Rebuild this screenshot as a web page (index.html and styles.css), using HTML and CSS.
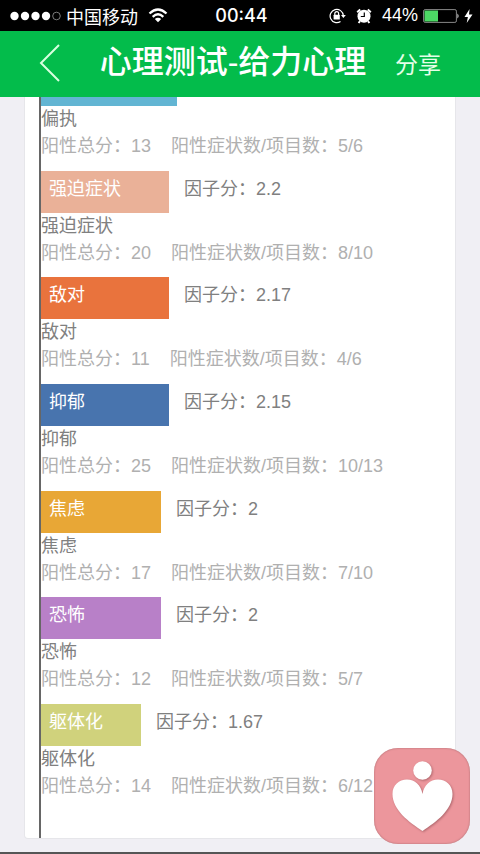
FILE: index.html
```html
<!DOCTYPE html>
<html lang="zh-CN">
<head>
    <meta charset="UTF-8">
    <meta name="viewport" content="width=device-width, initial-scale=1.0">
    <title>心理测试-给力心理</title>
    <link rel="stylesheet" href="styles.css">
</head>
<body>

    <div class="status-bar">
        <div class="status-left">
            <svg width="51" height="10" viewBox="0 0 51 10" fill="#fff">
                <circle cx="4.5" cy="5" r="4.2"/>
                <circle cx="15" cy="5" r="4.2"/>
                <circle cx="25.5" cy="5" r="4.2"/>
                <circle cx="36" cy="5" r="4.2"/>
                <circle cx="46.5" cy="5" r="3.8" fill="none" stroke="#999" stroke-width="0.8"/>
            </svg>
            <span class="carrier">中国移动</span>
            <svg width="20" height="15" viewBox="0 0 20 15" fill="none" stroke="#fff" stroke-width="2.3">
                <path d="M1.5 5.5Q10 -2.5 18.5 5.5"/>
                <path d="M4.7 8.8Q10 3.8 15.3 8.8"/>
                <path d="M10 14.2L6.8 11Q10 8.3 13.2 11Z" fill="#fff" stroke="none"/>
            </svg>
        </div>
        <span class="clock">00:44</span>
        <div class="status-right">
            <svg class="lock" width="17" height="16" viewBox="0 0 17 16" fill="none" stroke="#fff" stroke-width="1.2">
                <path d="M11.5 13.4A6.6 6.6 0 1 1 14.3 7.5"/>
                <path d="M12 7H16.8L14.4 10Z" fill="#fff" stroke="none"/>
                <path d="M5.8 7V5.6A1.9 1.9 0 0 1 9.6 5.6V7"/>
                <rect x="4.6" y="6.8" width="6.2" height="4.6" rx="0.5" fill="#fff" stroke="none"/>
            </svg>
            <svg class="alarm" width="16" height="16" viewBox="0 0 16 16">
                <circle cx="8" cy="8.2" r="6.5" fill="#fff"/>
                <path d="M1.2 4.2L4.2 1.4M14.8 4.2L11.8 1.4M4 13.2L2.6 15M12 13.2L13.4 15" stroke="#fff" stroke-width="2"/>
                <path d="M8.3 4.5V8.5H4.8" fill="none" stroke="#000" stroke-width="1.2"/>
            </svg>
            <span class="percent">44%</span>
            <svg width="37" height="16" viewBox="0 0 37 16">
                <rect x="0.6" y="1.6" width="32.8" height="12.8" rx="1.5" fill="none" stroke="#888" stroke-width="1"/>
                <rect x="1.5" y="2.5" width="13.5" height="11" fill="#4cd964"/>
                <path d="M34.5 5.5Q36.5 8 34.5 10.5Z" fill="#fff"/>
            </svg>
            <svg class="bolt" width="9" height="14" viewBox="0 0 9 14" fill="#fff">
                <path d="M5.6 0L0.5 8H3.9L2.7 14L8.5 5.5H5Z"/>
            </svg>
        </div>
    </div>

    <header class="nav">
        <button class="back" aria-label="返回">
            <svg width="22" height="38" viewBox="0 0 22 38" fill="none" stroke="#d9ffe0" stroke-width="2">
                <path d="M20 1L2 19L20 37"/>
            </svg>
        </button>
        <h1>心理测试-给力心理</h1>
        <button class="share">分享</button>
    </header>

    <main class="card">
        <ul class="factors">
            <li>
                <div class="bar-row clipped">
                    <span class="bar paranoia" style="width: 34%"></span>
                </div>
                <p class="name">偏执</p>
                <p class="detail"><span>阳性总分：13</span><span>阳性症状数/项目数：5/6</span></p>
            </li>
            <li>
                <div class="bar-row">
                    <span class="bar obsessive" style="width: 32%">强迫症状</span>
                    <span class="score">因子分：2.2</span>
                </div>
                <p class="name">强迫症状</p>
                <p class="detail"><span>阳性总分：20</span><span>阳性症状数/项目数：8/10</span></p>
            </li>
            <li>
                <div class="bar-row">
                    <span class="bar hostility" style="width: 32%">敌对</span>
                    <span class="score">因子分：2.17</span>
                </div>
                <p class="name">敌对</p>
                <p class="detail"><span>阳性总分：11</span><span>阳性症状数/项目数：4/6</span></p>
            </li>
            <li>
                <div class="bar-row">
                    <span class="bar depression" style="width: 32%">抑郁</span>
                    <span class="score">因子分：2.15</span>
                </div>
                <p class="name">抑郁</p>
                <p class="detail"><span>阳性总分：25</span><span>阳性症状数/项目数：10/13</span></p>
            </li>
            <li>
                <div class="bar-row">
                    <span class="bar anxiety" style="width: 30%">焦虑</span>
                    <span class="score">因子分：2</span>
                </div>
                <p class="name">焦虑</p>
                <p class="detail"><span>阳性总分：17</span><span>阳性症状数/项目数：7/10</span></p>
            </li>
            <li>
                <div class="bar-row">
                    <span class="bar phobia" style="width: 30%">恐怖</span>
                    <span class="score">因子分：2</span>
                </div>
                <p class="name">恐怖</p>
                <p class="detail"><span>阳性总分：12</span><span>阳性症状数/项目数：5/7</span></p>
            </li>
            <li>
                <div class="bar-row">
                    <span class="bar somatic" style="width: 25%">躯体化</span>
                    <span class="score">因子分：1.67</span>
                </div>
                <p class="name">躯体化</p>
                <p class="detail"><span>阳性总分：14</span><span>阳性症状数/项目数：6/12</span></p>
            </li>
        </ul>
    </main>

    <!-- Floating logo button -->
    <button class="logo" aria-label="给力心理">
        <svg width="96" height="96" viewBox="0 0 96 96" fill="#fff">
            <circle cx="48.5" cy="22.5" r="9.3"/>
            <path d="M48.5 83C35 74 18.5 62 18.5 46C18.5 37 25 31.5 33 31.5C41 31.5 47 37 48.5 46C50 37 56 31.5 64 31.5C72 31.5 78.5 37 78.5 46C78.5 62 62 74 48.5 83Z"/>
        </svg>
    </button>

</body>
</html>
```

FILE: styles.css
```css
* {
    box-sizing: border-box;
}

body {
    margin: 0;
    min-height: 100vh;
    display: flex;
    flex-direction: column;
    font-family: "Liberation Sans", "Noto Sans CJK SC", sans-serif;
    font-size: 18px;
    background-color: #f0eff4;
    border-bottom: 2px solid #555;
}

button {
    border: none;
    padding: 0;
    background: none;
    font-family: inherit;
    cursor: pointer;
}

svg {
    display: block;
}

.status-bar {
    display: grid;
    grid-template-columns: 1fr auto 1fr;
    align-items: center;
    height: 31px;
    padding: 0 7px 0 10px;
    background-color: #000;
    color: #fff;
}

.status-left, .status-right {
    display: flex;
    align-items: center;
}

.status-right {
    justify-content: flex-end;
}

.carrier {
    margin: 0 10px 0 5px;
}

.clock {
    font-family: Inter, sans-serif;
    font-size: 18px;
    font-weight: 500;
}

.percent {
    margin-right: 5px;
}

.lock, .alarm {
    margin-right: 10px;
}

.bolt {
    margin-left: 4px;
}

.nav {
    display: flex;
    align-items: center;
    justify-content: space-between;
    height: 66px;
    padding: 0 39px 2px;
    background-color: #03bc4b;
    color: #fff;
}

.nav h1 {
    margin: 0;
    font-size: 32px;
    font-weight: 500;
    line-height: 40px;
    padding-bottom: 2px;
    padding-left: 10px;
}

.share {
    color: #e4ffe8;
    font-size: 23px;
}

.card {
    flex: 1;
    display: flex;
    margin: 0 24px 13px;
    padding: 0 14px;
    background-color: #fff;
    border: 1px solid #e6e6ea;
    border-top: none;
    border-radius: 0 0 4px 4px;
}

.factors {
    flex: 1;
    display: flex;
    flex-direction: column;
    justify-content: space-between;
    margin: 0;
    padding: 0 0 38px;
    list-style: none;
    border-left: 2px solid #666;
}

.bar-row {
    display: flex;
    height: 42px;
    line-height: 36px;
}

.bar-row.clipped {
    height: 9px;
}

.bar {
    padding-left: 8px;
    color: #fff;
}

.score {
    margin-left: 15px;
    color: #808080;
}

.name, .detail {
    margin: 0;
    line-height: 27px;
}

.name {
    color: #808080;
}

.detail {
    display: flex;
    gap: 20px;
    color: #b0b0b0;
}

.paranoia {
    background-color: #62b5d3;
}

.obsessive {
    background-color: #eab198;
}

.hostility {
    background-color: #e9733d;
}

.depression {
    background-color: #4874ae;
}

.anxiety {
    background-color: #e8a736;
}

.phobia {
    background-color: #b880c8;
}

.somatic {
    background-color: #d0d27c;
}

.logo {
    position: fixed;
    right: 10px;
    bottom: 10px;
    border-radius: 24px;
    background-color: #ec969c;
    box-shadow: inset 0 0 2px #a06468;
}

.logo svg {
    filter: drop-shadow(1px 1px 1px #b0686e);
}
```
